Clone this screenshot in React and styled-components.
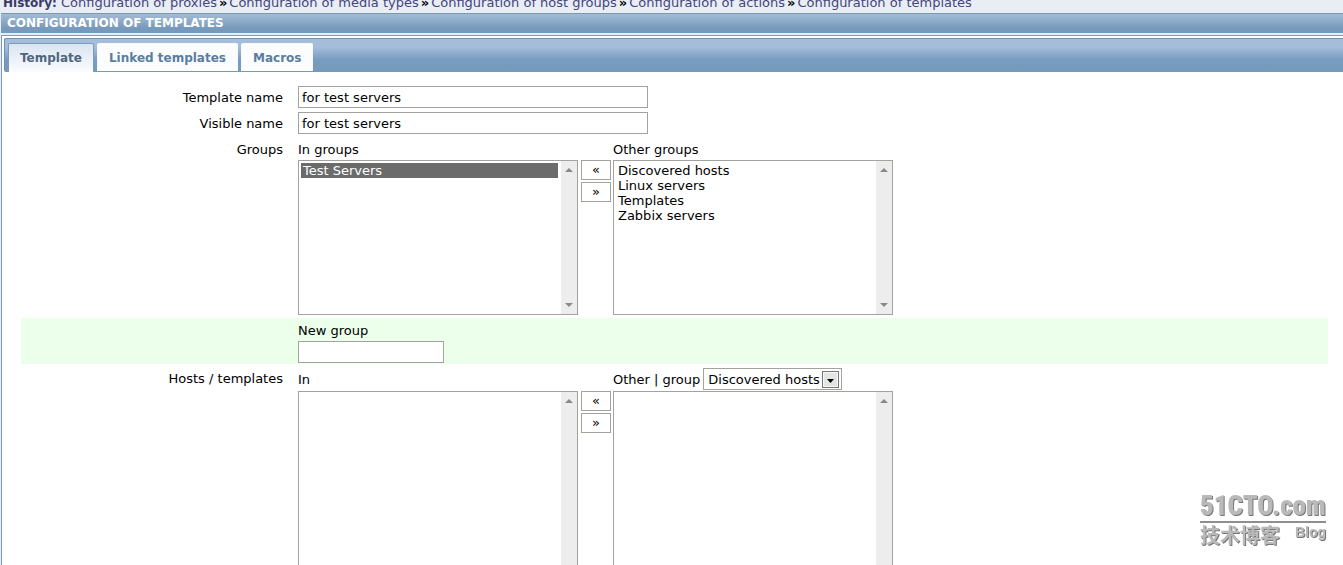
import React, { useState } from 'react'
import styled, { createGlobalStyle } from 'styled-components'

const GlobalStyle = createGlobalStyle`
  html {
    scrollbar-width: none;
  }
  body {
    margin: 0;
    background: white;
    color: black;
    font-family: Verdana, "DejaVu Sans", sans-serif;
    font-size: 13px;
  }
  *, *::before, *::after {
    box-sizing: border-box;
  }
  input, select, button {
    margin: 0;
    border: 1px solid #a3a39d;
    border-radius: 0;
    background: white;
    color: black;
    font: inherit;
    outline: none;
  }
`
const Page = styled.div`
  padding-left: 1px;
  background: #e8eef4;
`
const History = styled.nav`
  display: flex;
  align-items: flex-end;
  height: 13px;
  padding: 0 2px 2px;
  overflow: hidden;
  line-height: 16px;
  white-space: pre;
`
const HistoryLabel = styled.b`
  font-size: 12px;
  color: #3a3a66;
`
const HistoryLink = styled.a`
  color: #45457c;
  text-decoration: none;
`
const Separator = styled.b`
  padding: 0 2px;
`
const Heading = styled.h1`
  margin: 0 0 2px;
  padding: 0 6px;
  border-top: 1px solid #7d97b0;
  background: linear-gradient(#a3bcd6, #7799bb 75%);
  color: white;
  font-size: 12px;
  line-height: 19px;
`
const Panel = styled.main`
  min-height: 100vh;
  padding: 2px 0 0 2px;
  border: 1px solid #7c9abb;
  border-width: 1px 0 0 1px;
  background: white;
`
const Tabs = styled.div`
  display: flex;
  align-items: flex-end;
  gap: 3px;
  height: 34px;
  padding: 0 3px;
  border-top: 1px solid #7090b0;
  border-left: 1px solid #7090b0;
  border-radius: 2px 0 0 2px;
  background: linear-gradient(#a5bdd8 25%, #789cc2 62%, #769ab8);
`
const Tab = styled.button`
  height: ${props => props.$active ? 29 : 28}px;
  margin-bottom: ${props => props.$active ? 0 : 1}px;
  padding: 0 11px;
  border: 1px solid ${props => props.$active ? '#7b9cbd' : '#f5f9fc'};
  border-bottom: 0;
  border-radius: 2px 2px 0 0;
  background: ${props => props.$active ? 'linear-gradient(#dae5f1, #fafcfe)' : '#fafcfe'};
  color: ${props => props.$active ? '#4f6580' : '#5a7da0'};
  font-size: 12px;
  font-weight: bold;
`
const Form = styled.form`
  padding: 13px 15px 24px 17px;
`
const Row = styled.div`
  display: grid;
  grid-template-columns: 262px 1fr;
  column-gap: 15px;
  align-items: start;
  padding: 1px 0;
  ${props => props.$highlight && `
    margin: 2px 0;
    background: #ebffeb;
  `}
`
const Label = styled.label`
  line-height: 24px;
  text-align: right;
`
const Input = styled.input`
  display: block;
  width: ${props => props.$small ? 146 : 350}px;
  height: 22px;
  padding: 0 3px;
`
const Transfer = styled.div`
  display: grid;
  grid-template-columns: 280px 35px 280px;
`
const Caption = styled.label`
  display: flex;
  align-items: center;
  gap: 3px;
  min-height: 22px;
  white-space: nowrap;
`
const Arrows = styled.div`
  display: flex;
  flex-direction: column;
  gap: 2px;
  grid-column: 2;
  padding: 0 2px 0 3px;
`
const ArrowButton = styled.button`
  height: 20px;
  padding: 0;
  line-height: 18px;
`
const ListFrame = styled.div`
  display: flex;
  height: ${props => props.$tall ? 240 : 155}px;
  border: 1px solid #a3a39d;
`
const List = styled.select`
  flex: 1;
  min-width: 0;
  height: 100%;
  padding: 2px 3px 2px 2px;
  border: 0;
  scrollbar-width: none;

  option {
    min-height: 15px;
    height: 15px;
    padding: 0 2px;
    line-height: 15px;
  }
  option:checked {
    background: linear-gradient(#6b6b6b, #6b6b6b);
    color: white;
  }
`
const Track = styled.div`
  display: flex;
  flex-direction: column;
  justify-content: space-between;
  align-items: center;
  width: 16px;
  padding: 6px 0;
  background: #ededed;
`
const DropDown = styled.div`
  position: relative;
  padding: 1px 0;
`
const Select = styled.select`
  display: block;
  width: 139px;
  height: 22px;
  padding: 0 20px 0 4px;
  appearance: none;
`
const DropIcon = styled.svg`
  position: absolute;
  top: 4px;
  right: 3px;
  pointer-events: none;
`
const Watermark = styled.div`
  position: fixed;
  right: 17px;
  bottom: 16px;
  width: 126px;
  color: #b9b9b9;
  font-weight: bold;
  text-shadow: 1px 1px 0 #777;
  pointer-events: none;
`
const Site = styled.div`
  border-bottom: 2px solid #8e8e8e;
  font-family: Impact, "Roboto Condensed", "Liberation Sans", sans-serif;
  font-size: 27px;
  font-weight: 900;
  line-height: 30px;
`
const SiteNote = styled.div`
  display: flex;
  justify-content: space-between;
  font-family: "Liberation Sans", "Noto Sans CJK SC", sans-serif;
  font-size: 20px;
  line-height: 26px;
`
const Blog = styled.span`
  font-size: 14px;
  line-height: 18px;
`

const history = ['proxies', 'media types', 'host groups', 'actions', 'templates']
const tabs = ['Template', 'Linked templates', 'Macros']
const otherGroups = ['Discovered hosts', 'Linux servers', 'Templates', 'Zabbix servers']

const ListBox = ({ id, items = [], selected = [], tall }) => (
  <ListFrame $tall={tall}>
    <List id={id} multiple defaultValue={selected}>
      {items.map(item => <option key={item}>{item}</option>)}
    </List>
    <Track aria-hidden='true'>
      <svg width='8' height='6'><path d='M0 5 L4 1 L8 5 Z' fill='#8a8a8a' /></svg>
      <svg width='8' height='6'><path d='M0 1 L4 5 L8 1 Z' fill='#8a8a8a' /></svg>
    </Track>
  </ListFrame>
)

const MoveButtons = () => (
  <Arrows>
    <ArrowButton type='button' aria-label='Add'>«</ArrowButton>
    <ArrowButton type='button' aria-label='Remove'>»</ArrowButton>
  </Arrows>
)

export default function App () {
  const [active, setActive] = useState('Template')

  return (
    <Page>
      <GlobalStyle />
      <History>
        <HistoryLabel>History: </HistoryLabel>
        {history.map((name, i) => (
          <React.Fragment key={name}>
            {i > 0 && <Separator>»</Separator>}
            <HistoryLink href='#'>Configuration of {name}</HistoryLink>
          </React.Fragment>
        ))}
      </History>
      <Heading>CONFIGURATION OF TEMPLATES</Heading>
      <Panel>
        <Tabs role='tablist'>
          {tabs.map(tab => (
            <Tab
              key={tab}
              role='tab'
              aria-selected={tab === active}
              $active={tab === active}
              onClick={() => setActive(tab)}
            >
              {tab}
            </Tab>
          ))}
        </Tabs>
        <Form>
          <Row>
            <Label htmlFor='template'>Template name</Label>
            <Input id='template' defaultValue='for test servers' />
          </Row>
          <Row>
            <Label htmlFor='visible'>Visible name</Label>
            <Input id='visible' defaultValue='for test servers' />
          </Row>
          <Row>
            <Label htmlFor='groups'>Groups</Label>
            <Transfer>
              <Caption htmlFor='groups'>In groups</Caption>
              <span />
              <Caption htmlFor='otherGroups'>Other groups</Caption>
              <ListBox id='groups' items={['Test Servers']} selected={['Test Servers']} />
              <MoveButtons />
              <ListBox id='otherGroups' items={otherGroups} />
            </Transfer>
          </Row>
          <Row $highlight>
            <span />
            <div>
              <Caption htmlFor='newGroup'>New group</Caption>
              <Input id='newGroup' $small />
            </div>
          </Row>
          <Row>
            <Label htmlFor='hosts'>Hosts / templates</Label>
            <Transfer>
              <Caption htmlFor='hosts'>In</Caption>
              <span />
              <Caption as='div'>
                <label htmlFor='hostGroup'>Other | group</label>
                <DropDown>
                  <Select id='hostGroup'>
                    {otherGroups.map(group => <option key={group}>{group}</option>)}
                  </Select>
                  <DropIcon width='17' height='17' aria-hidden='true'>
                    <rect x='0.5' y='0.5' width='16' height='16' fill='#e4e4e4' stroke='#777' />
                    <rect x='1.5' y='1.5' width='14' height='14' fill='none' stroke='#f8f8f8' />
                    <path d='M5 8 H12 L8.5 12 Z' fill='black' />
                  </DropIcon>
                </DropDown>
              </Caption>
              <ListBox id='hosts' tall />
              <MoveButtons />
              <ListBox id='otherHosts' tall />
            </Transfer>
          </Row>
        </Form>
      </Panel>
      <Watermark>
        <Site>51CTO.com</Site>
        <SiteNote>
          技术博客
          <Blog>Blog</Blog>
        </SiteNote>
      </Watermark>
    </Page>
  )
}
